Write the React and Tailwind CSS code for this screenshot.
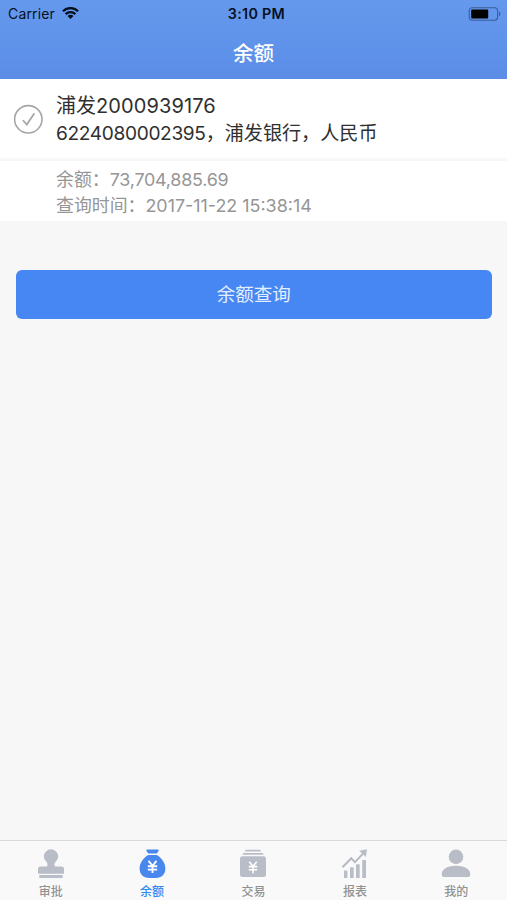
import { clsx } from 'clsx';

function WifiIcon() {
  return (
    <svg width="17" height="13" viewBox="0 0 17 13" fill="none" stroke="#06101f" strokeWidth="2.3">
      <path d="M0.900 4.200a10.800 10.800 0 0 1 15.200 0" />
      <path d="M3.600 7.100a7 7 0 0 1 9.800 0" />
      <path d="M8.500 12 5.500 9.100a4.200 4.200 0 0 1 6 0z" fill="#06101f" stroke="none" />
    </svg>
  );
}

function BatteryIcon() {
  return (
    <svg width="33" height="14" viewBox="0 0 33 14">
      <rect x="1.2" y="0.7" width="28.4" height="12.6" rx="3" fill="none" stroke="#3c5d99" strokeWidth="1.1" />
      <rect x="3.2" y="2.5" width="17" height="9" rx="1" fill="#000" />
      <path d="M31 4.600c1.800.700 1.800 3.900 0 4.600z" fill="#3c5d99" />
    </svg>
  );
}

function CheckCircle() {
  return (
    <svg className="shrink-0" width="30" height="30" viewBox="0 0 30 30" fill="none" stroke="#a5a5a5">
      <circle cx="15.3" cy="15.3" r="13.7" strokeWidth="1.6" />
      <path d="M9.900 16.200l3.900 4.300 7.600-11.300" strokeWidth="1.700" />
    </svg>
  );
}

function StampIcon() {
  return (
    <svg width="30" height="30" viewBox="0 0 30 30" fill="#b9bdc7">
      <path d="M15 0.300a7.200 7.200 0 0 1 7.200 7.200c0 3.600-3.700 5.300-3.700 7.900 0 1.600.6 2.100 1.800 2.100h5.200a2.500 2.500 0 0 1 2.500 2.500v4.700H2V20a2.500 2.500 0 0 1 2.500-2.500h5.200c1.200 0 1.800-.5 1.800-2.100 0-2.600-3.700-4.300-3.700-7.900A7.200 7.200 0 0 1 15 0.300z" />
      <rect x="3.300" y="26.100" width="23.400" height="2.900" rx="0.500" />
    </svg>
  );
}

function MoneyBagIcon() {
  return (
    <svg width="30" height="30" viewBox="0 0 30 30" fill="#4787ee">
      <path d="M10.300 0.400h10.400c1 0 1.300.8.800 1.600l-1.700 2.500h-8.600L9.500 2C9 1.200 9.300 0.400 10.300 0.400z" />
      <path d="M11.300 6h8.400c4.800 2.600 8.700 8.400 8.700 13.300 0 6.300-3.800 9.700-9.500 9.700h-6.800c-5.700 0-9.500-3.400-9.500-9.700 0-4.900 3.900-10.700 8.700-13.300z" />
      <path d="M11.500 11.800l4 5 4-5M15.500 16.500v7.500M10.800 17.300h9.400M10.800 20.600h9.400" fill="none" stroke="#fff" strokeWidth="1.900" />
    </svg>
  );
}

function TradeIcon() {
  return (
    <svg width="30" height="30" viewBox="0 0 30 30" fill="#b9bdc7">
      <path d="M7.800 0.800h14.400l1 1.700H6.800z" />
      <path d="M5.300 3.900h19.400l.8 1.900H4.500z" />
      <rect x="2" y="7.300" width="26" height="20.700" rx="2.500" />
      <path d="M11.200 12.800l3.800 4.400 3.800-4.400M15 17v7.300M10.800 17.600h8.400M10.800 20.700h8.400" fill="none" stroke="#fff" strokeWidth="1.600" />
    </svg>
  );
}

function ReportIcon() {
  return (
    <svg width="30" height="30" viewBox="0 0 30 30" fill="#b9bdc7">
      <rect x="4" y="21.500" width="3.400" height="7.500" rx="0.500" />
      <rect x="10" y="18.300" width="3.700" height="10.700" rx="0.500" />
      <rect x="16" y="15.300" width="3.700" height="13.700" rx="0.500" />
      <rect x="22.200" y="11" width="3.800" height="18" rx="0.500" />
      <path d="M2.500 18.300l8.800-9 3.600 3.800 8.600-9" fill="none" stroke="#b5b9c0" strokeWidth="2" />
      <path d="M19.200 1.800l7.800-1.500-1.200 7.700z" />
    </svg>
  );
}

function UserIcon() {
  return (
    <svg width="30" height="30" viewBox="0 0 30 30" fill="#b9bdc7">
      <circle cx="15" cy="7.800" r="7.300" />
      <path d="M0.700 25.200c0-5.300 6-8.500 14.300-8.500s14.300 3.200 14.300 8.500c0 2-.8 2.700-2.300 2.700H3c-1.500 0-2.300-.7-2.300-2.700z" />
    </svg>
  );
}

const tabs = [
  { label: '审批', icon: StampIcon },
  { label: '余额', icon: MoneyBagIcon, active: true },
  { label: '交易', icon: TradeIcon },
  { label: '报表', icon: ReportIcon },
  { label: '我的', icon: UserIcon },
];

function Header() {
  return (
    <header className="h-[79px] bg-gradient-to-b from-[#6599ed] to-[#5b8de7]">
      <div className="grid h-[27px] grid-cols-3 items-center pr-[6px] pl-2 text-[#06101f]">
        <div className="flex items-center gap-[7px] text-[14px] tracking-[0.15px]">
          Carrier
          <WifiIcon />
        </div>
        <div className="pl-1 text-center text-[14.3px] font-semibold tracking-[0.3px]">3:10 PM</div>
        <div className="flex justify-end">
          <BatteryIcon />
        </div>
      </div>
      <h1 className="pt-px text-center text-[20.5px] leading-[52px] font-medium text-white">余额</h1>
    </header>
  );
}

function AccountCard() {
  return (
    <section>
      <div className="flex h-[79px] items-center gap-[13px] bg-white pl-[13px] text-[#303030]">
        <CheckCircle />
        <div className="pt-[2px] whitespace-nowrap">
          <div className="text-[20px] leading-[27px]">浦发<span className="tracking-[0.1px]">2000939176</span></div>
          <div className="text-[19.1px] leading-[27px]"><span className="tracking-[-0.34px]">6224080002395</span>，浦发银行，人民币</div>
        </div>
      </div>
      <div className="mt-[3px] h-[60px] bg-white pt-[6px] pl-14 text-[17.9px] leading-[26px] text-[#969696]">
        <div>余额：<span className="tracking-[-0.22px]">73,704,885.69</span></div>
        <div>查询时间：2017-11-22 15:38:14</div>
      </div>
    </section>
  );
}

function TabBar() {
  return (
    <nav className="grid h-[60px] grid-cols-5 border-t border-[#d9d9da] bg-[#f9f9fa]">
      {tabs.map(({ label, icon: Icon, active }) => (
        <button key={label} className="flex flex-col items-center pt-2">
          <Icon />
          <span className={clsx('mt-[4px] text-[12px] leading-[18px] font-medium', active ? 'text-[#2f8cf5]' : 'text-[#929292]')}>
            {label}
          </span>
        </button>
      ))}
    </nav>
  );
}

export default function App() {
  return (
    <div className="flex h-[900px] w-[507px] flex-col overflow-hidden bg-[#f7f7f7] font-['Inter','Noto_Sans_CJK_SC',sans-serif]">
      <Header />
      <main className="flex-1">
        <AccountCard />
        <div className="pt-[48.5px] pr-[15px] pl-[15.5px]">
          <button className="h-[49px] w-full rounded-[6px] bg-[#4787f3] pt-px text-[18.5px] text-[#e4eeff]">余额查询</button>
        </div>
      </main>
      <TabBar />
    </div>
  );
}
